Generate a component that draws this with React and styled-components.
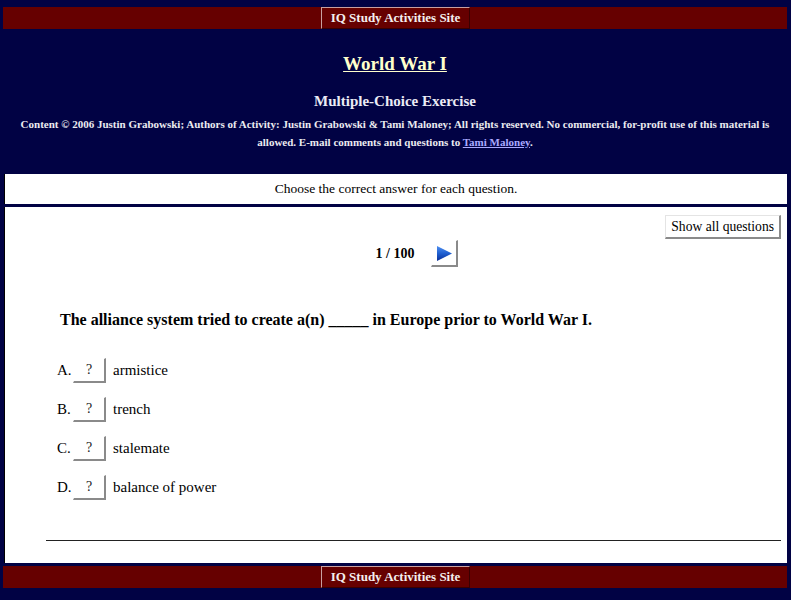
import React from "react";
import styled, { createGlobalStyle } from "styled-components";

const Global = createGlobalStyle`
  html, body { margin: 0; padding: 0; }
  body {
    background: #010244;
    font-family: "Liberation Serif", "Times New Roman", serif;
    color: #000;
  }
`;

const Page = styled.div`
  display: flex;
  flex-direction: column;
  padding: 7px 4px 12px 3px;
  width: 791px;
  box-sizing: border-box;
`;

const NavBar = styled.div`
  background: #660000;
  height: 22px;
  display: flex;
  justify-content: center;
  align-items: stretch;
  margin-top: ${(p) => p.$mt || 0}px;
`;

const NavButton = styled.button`
  font-family: "Liberation Serif", "Times New Roman", serif;
  font-weight: bold;
  font-size: 13px;
  white-space: nowrap;
  color: #f4eeee;
  background: #660000;
  border: 1px solid;
  border-color: #c9a0a0 #3a0000 #3a0000 #c9a0a0;
  padding: 0 6px;
  width: 149px;
  margin-left: 1px;
  cursor: pointer;
`;

const Header = styled.div`
  text-align: center;
  display: flex;
  flex-direction: column;
  align-items: center;
`;

const Title = styled.a`
  font-size: 19px;
  line-height: 24px;
  font-weight: bold;
  color: #ffffcc;
  text-decoration: underline;
  margin-top: 23px;
`;

const Subtitle = styled.h3`
  font-size: 15px;
  line-height: 20px;
  font-weight: bold;
  color: #ebebf5;
  margin: 15px 0 0;
`;

const Copyright = styled.p`
  font-size: 11px;
  line-height: 18px;
  font-weight: bold;
  color: #ebebf0;
  margin: 4px 0 0;
  padding: 0 12px;
  a { color: #aaaaff; text-decoration: underline; }
`;

const InfoBox = styled.div`
  margin-top: 23px;
  margin-left: 1px;
  background: #fff;
  height: 30px;
  border-left: 1px solid #000;
  display: flex;
  align-items: center;
  justify-content: center;
  font-size: 13.5px;
`;

const MainBox = styled.div`
  margin-top: 3px;
  margin-left: 1px;
  background: #fff;
  height: 356px;
  border-left: 1px solid #000;
  display: flex;
  flex-direction: column;
  padding: 8px 6px 0 0;
  box-sizing: border-box;
`;

const TopRow = styled.div`
  display: flex;
  justify-content: flex-end;
`;

const PlainButton = styled.button`
  font-family: "Liberation Serif", "Times New Roman", serif;
  font-size: 13.6px;
  background: #fff;
  color: #000;
  border: 1px solid;
  border-color: #e4e4e4 #8a8a8a #8a8a8a #e4e4e4;
  border-width: 1px 2px 2px 1px;
  padding: 0 5px;
  height: 24px;
  cursor: pointer;
`;

const NavRow = styled.div`
  display: flex;
  justify-content: center;
  align-items: center;
  gap: 17px;
  margin-top: 1px;
  margin-left: 4px;
`;

const Counter = styled.span`
  font-weight: bold;
  font-size: 14px;
`;

const ArrowButton = styled.button`
  width: 27px;
  height: 27px;
  background: #fff;
  border: 1px solid;
  border-color: #fff #8a8a8a #8a8a8a #fff;
  border-width: 1px 2px 2px 1px;
  padding: 0;
  display: flex;
  align-items: center;
  justify-content: center;
  visibility: ${(p) => (p.$hidden ? "hidden" : "visible")};
  cursor: pointer;
`;

const Question = styled.h3`
  font-size: 16px;
  line-height: 20px;
  font-weight: bold;
  margin: 43px 0 0 55px;
`;

const Answers = styled.ol`
  list-style: none;
  padding: 0;
  margin: 28px 0 0 52px;
  display: flex;
  flex-direction: column;
  gap: 14px;
`;

const AnswerRow = styled.li`
  display: flex;
  align-items: center;
  font-size: 15px;
  height: 25px;
`;

const Letter = styled.span`
  width: 16px;
`;

const QButton = styled.button`
  font-family: "Liberation Serif", "Times New Roman", serif;
  font-size: 14px;
  color: #222;
  width: 33px;
  height: 25px;
  background: #fff;
  border: 1px solid;
  border-color: #fff #8a8a8a #8a8a8a #fff;
  border-width: 1px 2px 2px 1px;
  padding: 0;
  margin-right: 7px;
  cursor: pointer;
`;

const Rule = styled.hr`
  margin: 40px 0 0 41px;
  border: none;
  border-top: 1px solid #222;
  height: 0;
`;

const Arrow = () => (
  <svg width="17" height="17" viewBox="0 0 17 17">
    <defs>
      <linearGradient id="ag" x1="0" y1="0" x2="0" y2="1">
        <stop offset="0" stopColor="#4f8ff0" />
        <stop offset="0.5" stopColor="#1f5fd0" />
        <stop offset="1" stopColor="#0a2f98" />
      </linearGradient>
    </defs>
    <polygon points="1,1 16,8.5 1,16" fill="url(#ag)" />
  </svg>
);

const answers = [
  ["A.", "armistice"],
  ["B.", "trench"],
  ["C.", "stalemate"],
  ["D.", "balance of power"],
];

export default function App() {
  return (
    <>
      <Global />
      <Page>
        <NavBar>
          <NavButton>IQ Study Activities Site</NavButton>
        </NavBar>
        <Header>
          <Title href="#">World War I</Title>
          <Subtitle>Multiple-Choice Exercise</Subtitle>
          <Copyright>
            Content © 2006 Justin Grabowski; Authors of Activity: Justin Grabowski &amp; Tami Maloney; All rights reserved. No commercial, for-profit use of this material is allowed. E-mail comments and questions to{" "}
            <a href="#">Tami Maloney</a>.
          </Copyright>
        </Header>
        <InfoBox>Choose the correct answer for each question.</InfoBox>
        <MainBox>
          <TopRow>
            <PlainButton>Show all questions</PlainButton>
          </TopRow>
          <NavRow>
            <ArrowButton $hidden>
              <Arrow />
            </ArrowButton>
            <Counter>1 / 100</Counter>
            <ArrowButton>
              <Arrow />
            </ArrowButton>
          </NavRow>
          <Question>The alliance system tried to create a(n) _____ in Europe prior to World War I.</Question>
          <Answers>
            {answers.map(([l, t]) => (
              <AnswerRow key={l}>
                <Letter>{l}</Letter>
                <QButton>?</QButton>
                {t}
              </AnswerRow>
            ))}
          </Answers>
          <Rule />
        </MainBox>
        <NavBar $mt={3}>
          <NavButton>IQ Study Activities Site</NavButton>
        </NavBar>
      </Page>
    </>
  );
}
